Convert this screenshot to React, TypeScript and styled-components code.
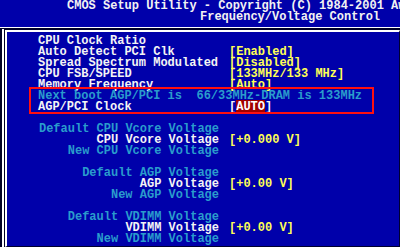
import styled, { createGlobalStyle } from "styled-components"

const GlobalStyle = createGlobalStyle`
    html, body {
        margin: 0;
        padding: 0;
        background: #0000aa;
    }
    * {
        box-sizing: border-box;
    }
`

const Page = styled.div`
    position: relative;
    width: 400px;
    height: 247px;
    overflow: hidden;
    background: #0000aa;
    font-family: "Liberation Mono", "DejaVu Sans Mono", monospace;
    font-size: 12px;
    font-weight: 700;
    line-height: 11px;
    white-space: pre;
    display: flex;
    flex-direction: column;
`

const Header = styled.div`
    height: 27px;
    padding-top: 1px;
    color: #f2f2f2;
    overflow: hidden;
`

const TitleLine = styled.div<{ $indent: number }>`
    height: 11px;
    padding-left: ${p => p.$indent}px;
`

const Frame = styled.div`
    flex: 1;
    display: flex;
    border-top: 1px solid #ffffff;
    background: #000028;
    padding: 1px 0 0 2px;
`

const FrameOuter = styled.div`
    flex: 1;
    display: flex;
    border-left: 2px solid #ffffff;
    padding: 1px 0 0 1px;
`

const FrameInner = styled.div`
    flex: 1;
    border-left: 2px solid #ffffff;
    border-top: 2px solid #ffffff;
    border-right: 1px solid #000030;
    border-bottom: 1px solid #000030;
    background: #0000aa;
    padding: 4px 0 0 31px;
`

const Row = styled.div`
    display: grid;
    grid-template-columns: 191px 1fr;
    height: 11px;
`

const Label = styled.span<{ $tone?: "main" | "dim"; $right?: boolean }>`
    color: ${p => (p.$tone === "dim" ? "#2a9ccc" : "#f4f4f4")};
    text-align: ${p => (p.$right ? "right" : "left")};
    padding-right: ${p => (p.$right ? "10px" : "0")};
`

const Value = styled.span`
    color: #ffff55;
`

const Bracket = styled.span`
    color: #f4f4f4;
`

const Highlight = styled.span`
    color: #ffffff;
    background: #a00000;
`

const Note = styled.div`
    height: 11px;
    color: #2a9ccc;
`

const Spacer = styled.div`
    height: 11px;
`

const RedMark = styled.div`
    position: absolute;
    left: 29px;
    top: 87px;
    width: 345px;
    height: 27px;
    border: 2px solid #ff1010;
    pointer-events: none;
`

type Setting = { label: string; value?: string }

const upper: Setting[] = [
    { label: "CPU Clock Ratio" },
    { label: "Auto Detect PCI Clk", value: "[Enabled]" },
    { label: "Spread Spectrum Modulated", value: "[Disabled]" },
    { label: "CPU FSB/SPEED", value: "[133MHz/133 MHz]" },
    { label: "Memory Frequency", value: "[Auto]" },
]

const voltages = [
    { name: "CPU Vcore", value: "[+0.000 V]" },
    { name: "AGP", value: "[+0.00 V]" },
    { name: "VDIMM", value: "[+0.00 V]" },
]

export default function App() {
    return (
        <>
            <GlobalStyle />
            <Page>
                <Header>
                    <TitleLine $indent={67}>CMOS Setup Utility - Copyright (C) 1984-2001 Aw</TitleLine>
                    <TitleLine $indent={200}>Frequency/Voltage Control</TitleLine>
                </Header>
                <Frame>
                    <FrameOuter>
                        <FrameInner>
                            {upper.map(s => (
                                <Row key={s.label}>
                                    <Label>{s.label}</Label>
                                    <Value>{s.value ?? ""}</Value>
                                </Row>
                            ))}
                            <Note>Next boot AGP/PCI is  66/33MHz-DRAM is 133MHz</Note>
                            <Row>
                                <Label>AGP/PCI Clock</Label>
                                <span>
                                    <Bracket>[</Bracket>
                                    <Highlight>AUTO</Highlight>
                                    <Bracket>]</Bracket>
                                </span>
                            </Row>
                            {voltages.map(v => (
                                <div key={v.name}>
                                    <Spacer />
                                    <Row>
                                        <Label $tone="dim" $right>Default {v.name} Voltage</Label>
                                        <span />
                                    </Row>
                                    <Row>
                                        <Label $right>{v.name} Voltage</Label>
                                        <Value>{v.value}</Value>
                                    </Row>
                                    <Row>
                                        <Label $tone="dim" $right>New {v.name} Voltage</Label>
                                        <span />
                                    </Row>
                                </div>
                            ))}
                        </FrameInner>
                    </FrameOuter>
                </Frame>
                <RedMark />
            </Page>
        </>
    )
}
